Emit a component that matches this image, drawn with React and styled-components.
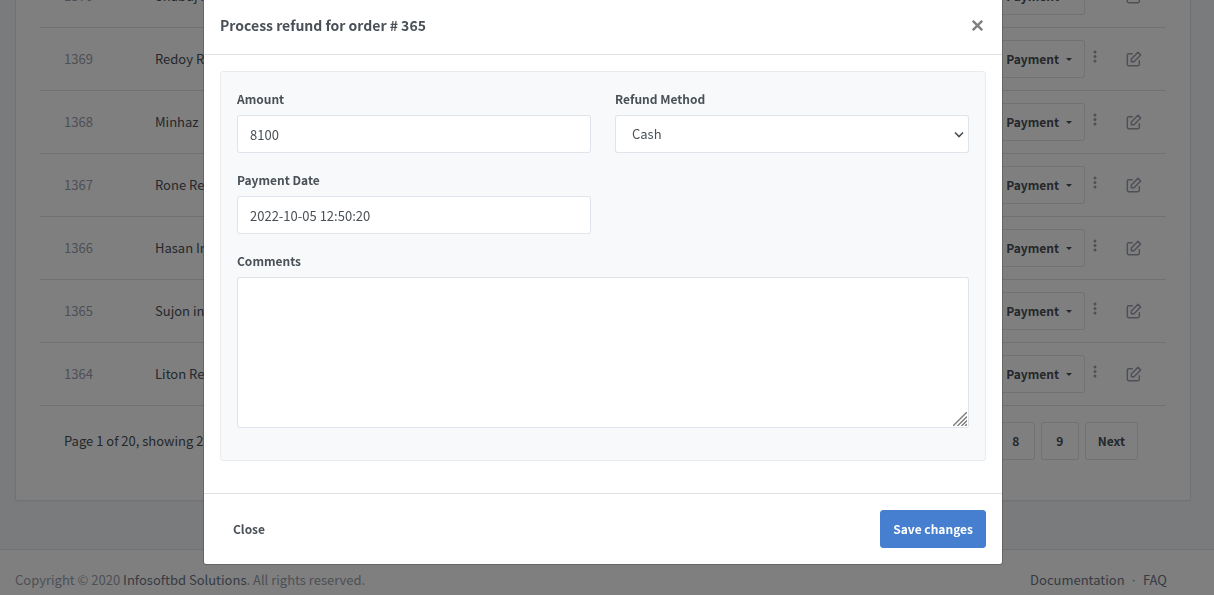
import React from "react";
import styled, { createGlobalStyle } from "styled-components";

const font = '"Source Sans Pro", "Noto Sans CJK SC", "Liberation Sans", sans-serif';

const GlobalStyle = createGlobalStyle`
  *, *::before, *::after { box-sizing: border-box; }
  body {
    margin: 0;
    background: #f5f7fb;
    color: #495057;
    font-family: ${font};
    font-size: 13px;
    line-height: 24px;
  }
  button, input, select, textarea { font: inherit; color: inherit; }
  a { color: inherit; text-decoration: none; }
`;

const Page = styled.div`
  height: 100vh;
  overflow: hidden;
  display: flex;
  flex-direction: column;
`;

const Main = styled.main`
  flex: none;
  margin-top: -35px;
  padding: 0 23px 48px 15px;
`;

const Card = styled.section`
  background: #fff;
  border: 1px solid rgba(0, 40, 100, 0.12);
  border-top: 0;
  border-radius: 3px;
  box-shadow: 0 1px 2px rgba(0, 0, 0, 0.05);
  padding: 0 24px;
`;

const OrdersTable = styled.table`
  width: 100%;
  table-layout: fixed;
  border-collapse: separate;
  border-spacing: 0;
`;

const Cell = styled.td`
  width: ${(p) => p.$width || "auto"};
  height: 63px;
  padding: 0 ${(p) => p.$right || 0} 0 ${(p) => p.$left || "12px"};
  border-bottom: 1px solid #dee2e6;
  color: ${(p) => (p.$muted ? "#9aa0ac" : "inherit")};
  text-align: ${(p) => p.$align || "left"};
  white-space: nowrap;
  vertical-align: middle;
`;

const RowActions = styled.div`
  display: flex;
  align-items: center;
  justify-content: flex-end;
  gap: 8px;
  color: #9aa0ac;
`;

const Button = styled.button`
  height: 38px;
  min-width: 38px;
  padding: 0 12px;
  border: 1px solid ${(p) => (p.$primary ? "#467fcf" : p.$plain ? "transparent" : "rgba(0, 40, 100, 0.12)")};
  border-radius: 3px;
  background: ${(p) => (p.$primary ? "#467fcf" : "#fff")};
  color: ${(p) => (p.$primary ? "#fff" : "#495057")};
  font-size: 12px;
  font-weight: 600;
  line-height: 24px;
  white-space: nowrap;
  cursor: pointer;
`;

const Caret = styled.span`
  display: inline-block;
  margin-left: 7px;
  vertical-align: 3px;
  border-top: 3px solid;
  border-left: 3px solid transparent;
  border-right: 3px solid transparent;
`;

const IconButton = styled.button`
  display: inline-flex;
  padding: 0;
  border: 0;
  background: none;
  color: ${(p) => p.$color || "#9aa0ac"};
  cursor: pointer;
`;

const Pager = styled.div`
  display: flex;
  align-items: center;
  justify-content: space-between;
  padding: 16px 28px 40px 24px;
`;

const PageButtons = styled.nav`
  display: flex;
  gap: 6px;
`;

const SiteFooter = styled.footer`
  flex: 1 0 auto;
  display: flex;
  align-items: flex-start;
  justify-content: space-between;
  padding: 18px 47px 18px 15px;
  border-top: 1px solid rgba(0, 40, 100, 0.12);
  background: #fff;
  color: #9aa0ac;
`;

const FooterLink = styled.a`
  color: #6e7687;
`;

const FooterLinks = styled.div`
  display: flex;
  gap: 7px;
  color: #6e7687;
`;

const Separator = styled.span`
  font-family: "Liberation Sans", sans-serif;
`;

const Overlay = styled.div`
  position: fixed;
  inset: 0;
  padding-right: 8px;
  background: rgba(0, 0, 0, 0.5);
  overflow: hidden;
`;

const Dialog = styled.form`
  max-width: 800px;
  margin: -3px auto 0;
  background: #fff;
  background-clip: padding-box;
  border: 1px solid rgba(0, 0, 0, 0.2);
  border-radius: 3px;
`;

const DialogHeader = styled.header`
  display: flex;
  align-items: center;
  justify-content: space-between;
  padding: 15px 19px 17px 16px;
  border-bottom: 1px solid #dee2e6;
`;

const Title = styled.h5`
  margin: 0;
  font-size: 14px;
  font-weight: 600;
  line-height: 24px;
`;

const DialogBody = styled.div`
  padding: 16px;
`;

const FieldPanel = styled.fieldset`
  display: grid;
  grid-template-columns: 1fr 1fr;
  gap: 16px 24px;
  margin: 0 0 16px;
  padding: 16px 16px 32px;
  border: 1px solid #e9ecef;
  border-radius: 3px;
  background: #f8f9fa;
`;

const Field = styled.div`
  display: flex;
  flex-direction: column;
  grid-column: ${(p) => (p.$wide ? "1 / -1" : "1")};
  ${(p) => p.$second && "grid-column: 2;"}
  position: relative;
`;

const Label = styled.label`
  margin-bottom: 6px;
  font-size: 12px;
  font-weight: 600;
  line-height: 21px;
`;

const Input = styled.input`
  width: 100%;
  height: 38px;
  padding: 0 12px;
  border: 1px solid rgba(0, 40, 100, 0.12);
  border-radius: 3px;
  background: #fff;
`;

const Select = styled.select`
  width: 100%;
  height: 38px;
  padding: 0 16px;
  border: 1px solid rgba(0, 40, 100, 0.12);
  border-radius: 3px;
  background: #fff;
  appearance: none;
`;

const TextArea = styled.textarea`
  display: block;
  width: 100%;
  height: 151px;
  padding: 6px 12px;
  border: 1px solid rgba(0, 40, 100, 0.12);
  border-radius: 3px;
  background: #fff;
  resize: none;
`;

const Corner = styled.svg`
  position: absolute;
  right: ${(p) => p.$right};
  bottom: ${(p) => p.$bottom};
  pointer-events: none;
`;

const DialogFooter = styled.footer`
  display: flex;
  align-items: center;
  justify-content: space-between;
  padding: 16px;
  border-top: 1px solid #dee2e6;
`;

const orders = [
  ["1370", "Shabuj I"],
  ["1369", "Redoy R"],
  ["1368", "Minhaz"],
  ["1367", "Rone Re"],
  ["1366", "Hasan Ir"],
  ["1365", "Sujon in"],
  ["1364", "Liton Re"],
];

const Dots = () => (
  <svg width="4" height="18" viewBox="0 0 4 18" fill="currentColor">
    <circle cx="2" cy="2" r="1.5" />
    <circle cx="2" cy="6.5" r="1.5" />
    <circle cx="2" cy="11" r="1.5" />
  </svg>
);

const Edit = () => (
  <svg width="16" height="16" viewBox="0 0 24 24" fill="none" stroke="currentColor" strokeWidth="2.2" strokeLinecap="round" strokeLinejoin="round">
    <path d="M20 14.7V20a2 2 0 0 1-2 2H4a2 2 0 0 1-2-2V6a2 2 0 0 1 2-2h5.3" />
    <path d="M18 2l4 4-10 10H8v-4L18 2z" />
  </svg>
);

const Close = () => (
  <svg width="11" height="11" viewBox="0 0 11 11" stroke="currentColor" strokeWidth="2.4">
    <path d="M0.8 0.8L10.2 10.2M10.2 0.8L0.8 10.2" />
  </svg>
);

export default function App() {
  return (
    <>
      <GlobalStyle />
      <Page>
        <Main>
          <Card>
            <OrdersTable>
              <tbody>
                {orders.map(([id, name]) => (
                  <tr key={id}>
                    <Cell $width="103px" $left="24px" $muted>{id}</Cell>
                    <Cell>{name}</Cell>
                    <Cell $width="160px" $align="right">
                      <RowActions>
                        <Button type="button">Payment<Caret /></Button>
                        <IconButton type="button" aria-label="More"><Dots /></IconButton>
                      </RowActions>
                    </Cell>
                    <Cell $width="69px" $align="right" $right="24px">
                      <RowActions>
                        <IconButton type="button" aria-label="Edit order"><Edit /></IconButton>
                      </RowActions>
                    </Cell>
                  </tr>
                ))}
              </tbody>
            </OrdersTable>
            <Pager>
              <span>Page 1 of 20, showing 2</span>
              <PageButtons aria-label="Pages">
                <Button type="button">8</Button>
                <Button type="button">9</Button>
                <Button type="button">Next</Button>
              </PageButtons>
            </Pager>
          </Card>
        </Main>
        <SiteFooter>
          <span>Copyright © 2020 <FooterLink href="#">Infosoftbd Solutions</FooterLink>. All rights reserved.</span>
          <FooterLinks>
            <a href="#">Documentation</a>
            <Separator>·</Separator>
            <a href="#">FAQ</a>
          </FooterLinks>
        </SiteFooter>
      </Page>
      <Overlay>
        <Dialog role="dialog" aria-labelledby="refund-title" onSubmit={(e) => e.preventDefault()}>
          <DialogHeader>
            <Title id="refund-title">Process refund for order # 365</Title>
            <IconButton type="button" aria-label="Dismiss" $color="#7f7f7f"><Close /></IconButton>
          </DialogHeader>
          <DialogBody>
            <FieldPanel>
              <Field>
                <Label htmlFor="amount">Amount</Label>
                <Input id="amount" defaultValue="8100" />
              </Field>
              <Field $second>
                <Label htmlFor="method">Refund Method</Label>
                <Select id="method"><option>Cash</option></Select>
                <Corner $right="5px" $bottom="14px" width="10" height="8" viewBox="0 0 10 8" fill="none" stroke="#495057" strokeWidth="1.6">
                  <path d="M1 1.5l4 4 4-4" />
                </Corner>
              </Field>
              <Field>
                <Label htmlFor="date">Payment Date</Label>
                <Input id="date" defaultValue="2022-10-05 12:50:20" />
              </Field>
              <Field $wide>
                <Label htmlFor="comments">Comments</Label>
                <TextArea id="comments" />
                <Corner $right="2px" $bottom="2px" width="14" height="14" viewBox="0 0 14 14" fill="none" stroke="#777" strokeWidth="1.3">
                  <path d="M0 14L14 0M4.5 14L14 4.5M8.5 14L14 8.5M12 14L14 12" />
                </Corner>
              </Field>
            </FieldPanel>
          </DialogBody>
          <DialogFooter>
            <Button type="button" $plain>Close</Button>
            <Button type="submit" $primary>Save changes</Button>
          </DialogFooter>
        </Dialog>
      </Overlay>
    </>
  );
}
